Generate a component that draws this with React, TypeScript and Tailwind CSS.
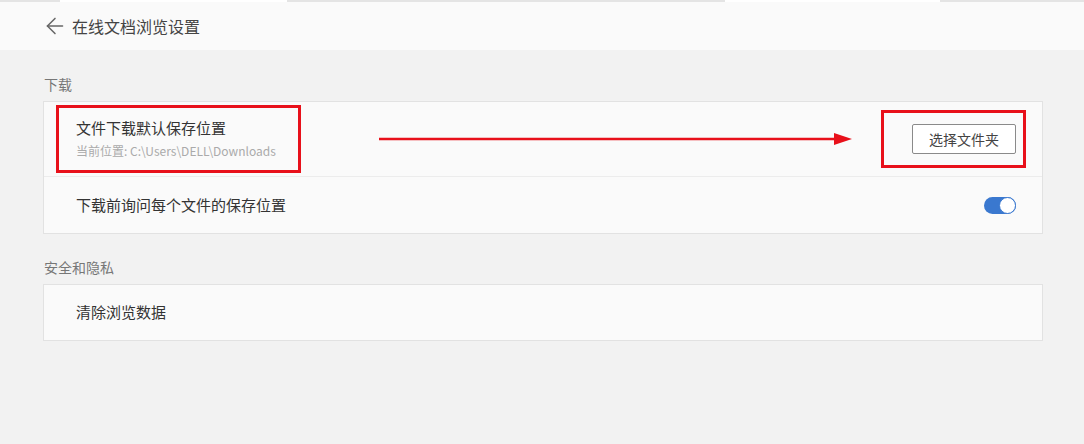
import { ArrowLeft } from "lucide-react";

const font = { fontFamily: '"Noto Sans CJK SC", "Noto Sans", sans-serif' };

function Toggle({ on }: { on: boolean }) {
  return (
    <div
      className={`w-[32px] h-[17px] rounded-full flex items-center ${
        on ? "bg-[#3a78cf] justify-end" : "bg-[#ccc] justify-start"
      }`}
    >
      <div className="w-[17px] h-[17px] rounded-full bg-white border-[1.5px] border-[#3a78cf]" />
    </div>
  );
}

function RedArrow() {
  return (
    <svg className="w-full h-[14px]" viewBox="0 0 473 14" preserveAspectRatio="none">
      <line x1="0" y1="7" x2="458" y2="7" stroke="#e8101a" strokeWidth="2.5" />
      <polygon points="455,1 473,7 455,13" fill="#e8101a" />
    </svg>
  );
}

export default function App() {
  return (
    <div className="w-[1084px] h-[444px] bg-[#f2f2f2] flex flex-col text-[#333]" style={font}>
      <div className="h-[50px] bg-[#fafafa] flex flex-col">
        <div className="h-[2px] flex bg-[#e4e4e4]">
          <div className="w-[60px]" />
          <div className="w-[227px] bg-white" />
          <div className="w-[438px]" />
          <div className="w-[215px] bg-white" />
        </div>
        <div className="flex-1 flex items-center pl-[42px] pb-[1px]">
          <ArrowLeft className="w-[26px] h-[26px] text-[#666]" strokeWidth={1.4} />
          <span className="ml-[4px] text-[16px] text-[#444]">在线文档浏览设置</span>
        </div>
      </div>

      <div className="pt-[24px] ml-[43px] w-[1000px]">
        <div className="text-[14px] leading-[20px] text-[#777] pl-[1px]">下载</div>
        <div className="mt-[7px] border border-[#e2e2e2] bg-[#fafafa]">
          <div className="h-[75px] border-b border-[#ececec] flex items-center pl-[12px] pr-[16px]">
            <div className="w-[245px] h-[68px] border-[3px] border-[#e8101a] pl-[17px] flex flex-col justify-center">
              <div className="text-[15px] leading-[20px] text-[#333]">文件下载默认保存位置</div>
              <div className="text-[12px] leading-[18px] mt-[4px] text-[#aaa]">
                当前位置: C:\Users\DELL\Downloads
              </div>
            </div>
            <div className="flex-1 ml-[78px] mr-[29px] flex items-center">
              <RedArrow />
            </div>
            <div className="w-[145px] h-[58px] border-[3px] border-[#e8101a] pl-[28px] flex items-center">
              <button className="w-[104px] h-[30px] bg-white border border-[#8a8a8a] rounded-[2px] text-[14px] text-[#444]">
                选择文件夹
              </button>
            </div>
          </div>
          <div className="h-[56px] flex items-center justify-between pl-[32px] pr-[26px]">
            <span className="text-[15px] text-[#333]">下载前询问每个文件的保存位置</span>
            <Toggle on />
          </div>
        </div>

        <div className="mt-[23px] text-[14px] leading-[20px] text-[#777] pl-[1px]">安全和隐私</div>
        <div className="mt-[7px] border border-[#e2e2e2] bg-[#fafafa] h-[57px] flex items-center pl-[32px]">
          <span className="text-[15px] text-[#333]">清除浏览数据</span>
        </div>
      </div>
    </div>
  );
}
